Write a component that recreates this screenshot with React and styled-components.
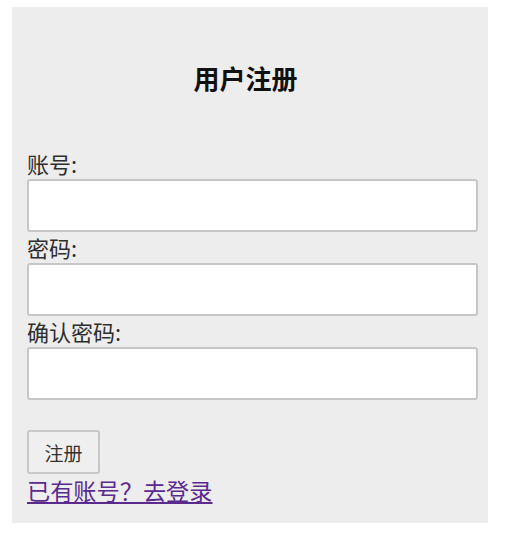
import React from "react";
import styled, { createGlobalStyle } from "styled-components";

const GlobalStyle = createGlobalStyle`
  html, body {
    margin: 0;
    padding: 0;
    background: #ffffff;
  }
  body {
    font-family: "Noto Sans CJK SC", "Noto Sans", "Liberation Sans", sans-serif;
  }
`;

function App() {
  return (
    <>
      <GlobalStyle />
      <Panel>
        <Title>用户注册</Title>
        <Form onSubmit={(e) => e.preventDefault()}>
          <Label htmlFor="account">账号:</Label>
          <Input id="account" type="text" />
          <Label htmlFor="password">密码:</Label>
          <Input id="password" type="password" />
          <Label htmlFor="confirm">确认密码:</Label>
          <Input id="confirm" type="password" />
          <Button type="submit">注册</Button>
          <LoginLink href="#login">已有账号？去登录</LoginLink>
        </Form>
      </Panel>
    </>
  );
}

const Panel = styled.div`
  box-sizing: border-box;
  width: 476px;
  height: 516px;
  margin: 7px 0 0 12px;
  padding: 56px 10px 0 15px;
  background: #ededed;
`;

const Title = styled.h3`
  margin: 0 0 55px;
  padding-right: 14px;
  font-size: 26px;
  line-height: 30px;
  font-weight: 700;
  text-align: center;
  color: #111;
`;

const Form = styled.form`
  display: flex;
  flex-direction: column;
  align-items: flex-start;
`;

const Label = styled.label`
  font-size: 22px;
  line-height: 31px;
  color: #2e2e2e;
`;

const Input = styled.input`
  box-sizing: border-box;
  width: 451px;
  height: 53px;
  margin: 0;
  border: 2px solid #c6c6c6;
  border-radius: 3px;
  background: #ffffff;
  outline: none;
`;

const Button = styled.button`
  box-sizing: border-box;
  width: 73px;
  height: 44px;
  margin-top: 30px;
  padding: 0;
  border: 2px solid #c8c8c8;
  border-radius: 3px;
  background: #efefef;
  color: #333;
  font-family: inherit;
  font-size: 19px;
`;

const LoginLink = styled.a`
  margin-top: 2px;
  font-size: 23.2px;
  line-height: 28px;
  color: #5b2a8e;
  text-decoration: underline;
`;

export default App;
